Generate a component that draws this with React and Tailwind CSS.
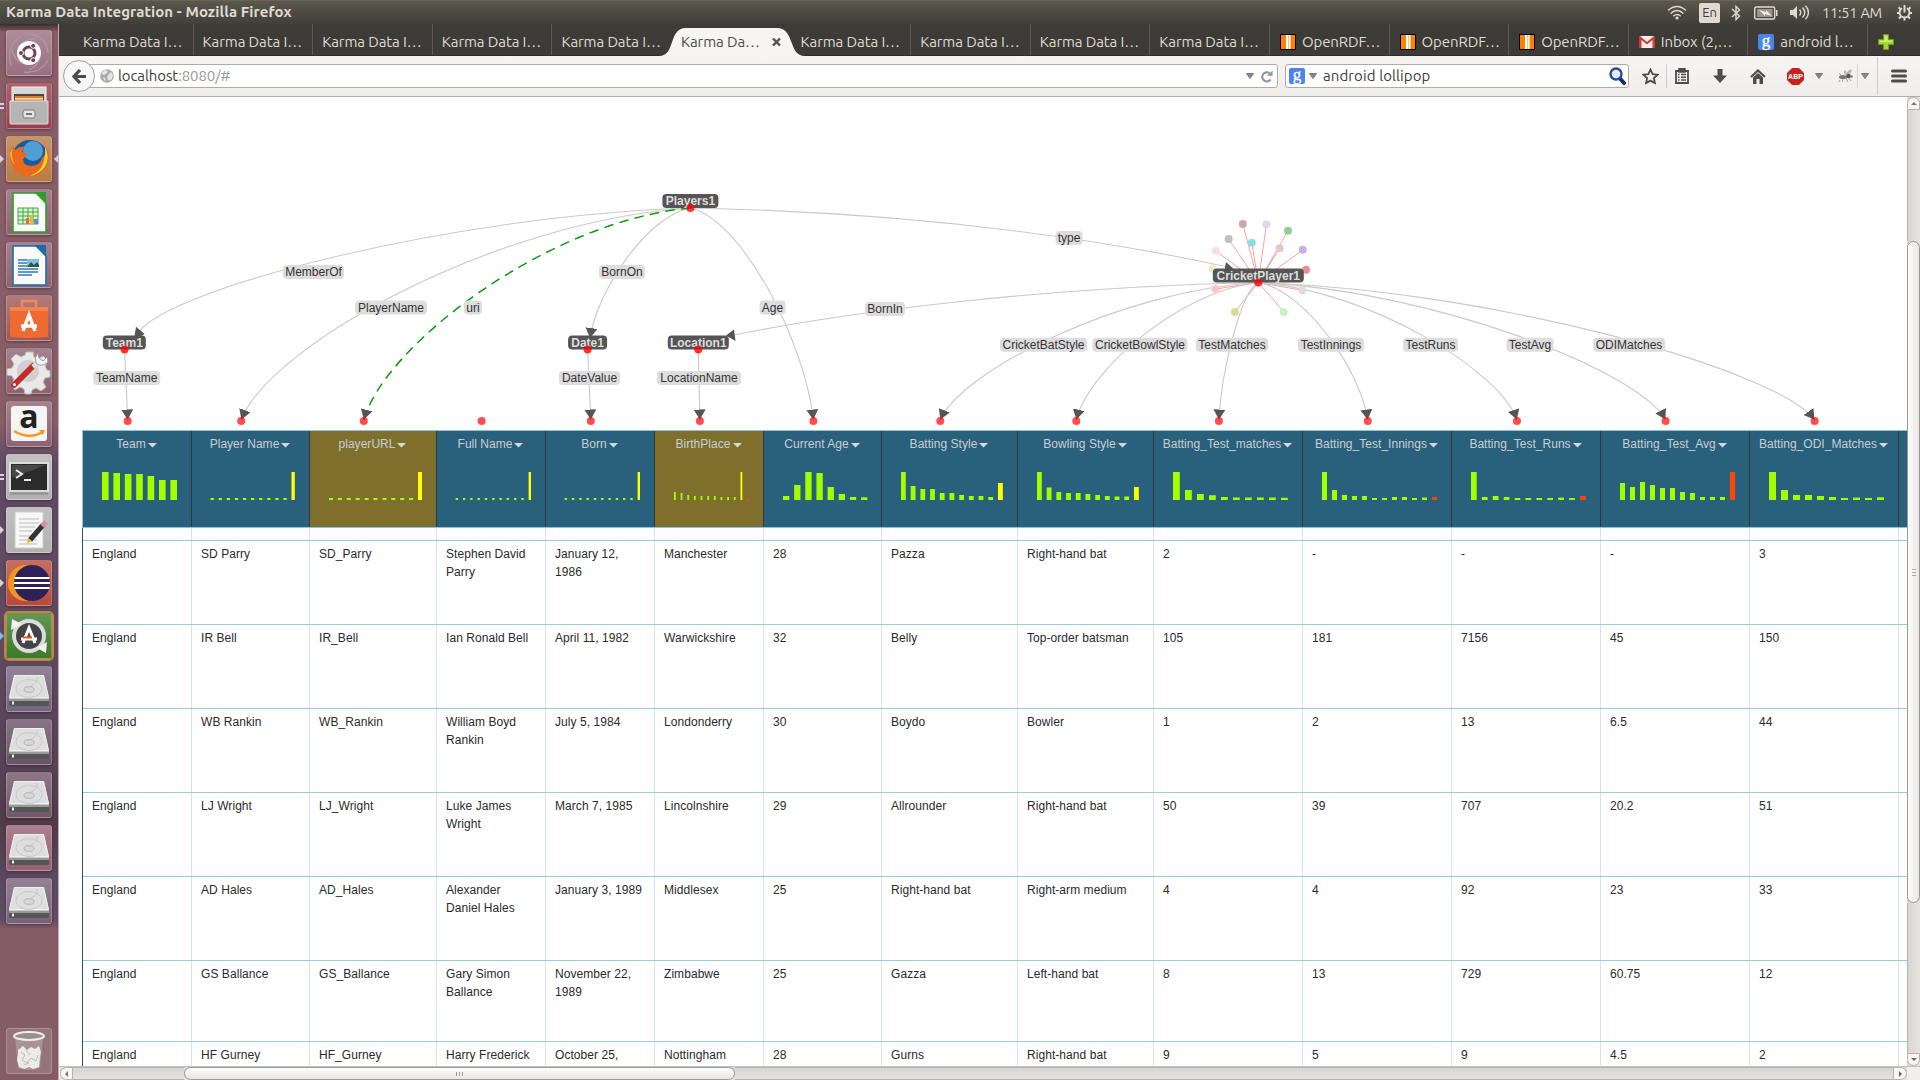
import React from "react";

const Y = "#ffff00";
const R = "#ff4500";

/* column header, width and the histogram drawn under it */
const columns = [
  { name: "Team", w: "w-[109px]", x: 20, pitch: 11.4, bw: 6.6, h: [28, 27, 26, 26, 24, 20, 20] },
  { name: "Player Name", w: "w-[118px]", x: 19.5, pitch: 8.1, bw: 3.3, h: [2, 2, 2, 2, 2, 2, 2, 2, 2, 2, 28], hi: { 10: Y } },
  { name: "playerURL", w: "w-[127px]", gold: true, x: 20, pitch: 8.9, bw: 4, h: [2, 2, 2, 2, 2, 2, 2, 2, 2, 2, 28], hi: { 10: Y } },
  { name: "Full Name", w: "w-[109px]", x: 19.6, pitch: 7.3, bw: 2.4, h: [2, 2, 2, 2, 2, 2, 2, 2, 2, 2, 28], hi: { 10: Y } },
  { name: "Born", w: "w-[109px]", x: 19.6, pitch: 7.3, bw: 2.4, h: [2, 2, 2, 2, 2, 2, 2, 2, 2, 2, 28], hi: { 10: Y } },
  { name: "BirthPlace", w: "w-[109px]", gold: true, x: 20, pitch: 6.65, bw: 1.8, h: [8, 7, 5, 4, 4, 4, 4, 3, 3, 3, 28, 2], hi: { 10: Y, 11: R } },
  { name: "Current Age", w: "w-[118px]", x: 20, pitch: 11.15, bw: 6.3, h: [4, 15, 28, 27, 13, 6, 3, 2.7] },
  { name: "Batting Style", w: "w-[136px]", x: 20, pitch: 9.7, bw: 4.8, h: [28, 14, 11, 11, 7, 7, 5, 4, 4, 3, 17], hi: { 10: Y } },
  { name: "Bowling Style", w: "w-[136px]", x: 20, pitch: 9.7, bw: 4.8, h: [28, 12.5, 8, 7, 7, 6, 5, 4, 3.5, 3.5, 13], hi: { 10: Y } },
  { name: "Batting_Test_matches", w: "w-[149px]", x: 20, pitch: 12, bw: 6.8, h: [28, 10, 6, 4.7, 3, 2.5, 2.5, 2.5, 2.5, 2.2] },
  { name: "Batting_Test_Innings", w: "w-[149px]", x: 20, pitch: 10, bw: 5, h: [28, 10, 5, 4, 4, 2, 2, 3, 3, 2, 2.5, 3], hi: { 11: R } },
  { name: "Batting_Test_Runs", w: "w-[149px]", x: 20, pitch: 10.9, bw: 5.7, h: [28, 3, 4, 3, 2, 2, 2, 2, 2.4, 2, 4], hi: { 10: R } },
  { name: "Batting_Test_Avg", w: "w-[149px]", x: 20, pitch: 10, bw: 5, h: [17, 13, 18, 15, 12, 12, 8, 7, 3, 3, 3, 28], hi: { 11: R } },
  { name: "Batting_ODI_Matches", w: "w-[149px]", x: 20, pitch: 12, bw: 7, h: [28, 10, 5, 5, 4, 3, 2, 2.4, 2, 2.7] },
];

const rows = [
  ["England", "SD Parry", "SD_Parry", "Stephen David Parry", "January 12, 1986", "Manchester", "28", "Pazza", "Right-hand bat", "2", "-", "-", "-", "3"],
  ["England", "IR Bell", "IR_Bell", "Ian Ronald Bell", "April 11, 1982", "Warwickshire", "32", "Belly", "Top-order batsman", "105", "181", "7156", "45", "150"],
  ["England", "WB Rankin", "WB_Rankin", "William Boyd Rankin", "July 5, 1984", "Londonderry", "30", "Boydo", "Bowler", "1", "2", "13", "6.5", "44"],
  ["England", "LJ Wright", "LJ_Wright", "Luke James Wright", "March 7, 1985", "Lincolnshire", "29", "Allrounder", "Right-hand bat", "50", "39", "707", "20.2", "51"],
  ["England", "AD Hales", "AD_Hales", "Alexander Daniel Hales", "January 3, 1989", "Middlesex", "25", "Right-hand bat", "Right-arm medium", "4", "4", "92", "23", "33"],
  ["England", "GS Ballance", "GS_Ballance", "Gary Simon Ballance", "November 22, 1989", "Zimbabwe", "25", "Gazza", "Left-hand bat", "8", "13", "729", "60.75", "12"],
  ["England", "HF Gurney", "HF_Gurney", "Harry Frederick", "October 25,", "Nottingham", "28", "Gurns", "Right-hand bat", "9", "5", "9", "4.5", "2"],
];

/* ---------- model graph ---------- */

const PLAYERS = [690.4, 208];
const CRICKET = [1258.3, 282.5];

function swoop([x, y], [ex, ey]) {
  const dx = ex - x;
  const dy = ey - y;
  return `M${x},${y}C${x + 0.434 * dx},${y + 0.06 * dy} ${x + 0.937 * dx},${y + 0.647 * dy} ${ex},${ey}`;
}

const columnLinks = [
  swoop(PLAYERS, [241.2, 420]),
  swoop(PLAYERS, [590, 338.5]),
  swoop(PLAYERS, [813.4, 420]),
  swoop(CRICKET, [940.3, 420]),
  swoop(CRICKET, [1076.3, 420]),
  swoop(CRICKET, [1218.9, 420]),
  swoop(CRICKET, [1367.8, 420]),
  swoop(CRICKET, [1517, 420]),
  swoop(CRICKET, [1665.6, 420]),
  swoop(CRICKET, [1814.7, 420]),
  "M124.6,350L127.7,420",
  "M587.6,350L590.8,420",
  "M698.3,350L699.9,420",
];

const labels = [
  ["MemberOf", 313.5, 272], ["PlayerName", 391, 307.5], ["uri", 473, 307.5], ["BornOn", 622, 272],
  ["TeamName", 126.7, 378], ["DateValue", 589.5, 378], ["LocationName", 699, 378], ["Age", 772.5, 307.5],
  ["BornIn", 885, 309], ["type", 1069, 238], ["CricketBatStyle", 1043.5, 344.7], ["CricketBowlStyle", 1140, 344.7],
  ["TestMatches", 1232, 344.7], ["TestInnings", 1331, 344.7], ["TestRuns", 1430.5, 344.7], ["TestAvg", 1530, 344.7],
  ["ODIMatches", 1629, 344.7],
];
const labelWidths = { MemberOf: 61, PlayerName: 72, uri: 18, BornOn: 46, TeamName: 67, DateValue: 61, LocationName: 84, Age: 26, BornIn: 40, type: 27, CricketBatStyle: 87, CricketBowlStyle: 95, TestMatches: 72, TestInnings: 66, TestRuns: 55, TestAvg: 47, ODIMatches: 72 };

const nodes = [
  ["Players1", 690.4, 201, 56, PLAYERS],
  ["Team1", 124.3, 342.5, 43, [124.6, 349.5]],
  ["Date1", 587.6, 342.5, 39, [587.6, 349.5]],
  ["Location1", 698.3, 342.5, 61, [698.3, 349.5]],
  ["CricketPlayer1", 1258.3, 275.5, 91, CRICKET],
];

const columnDots = [127.7, 241.2, 363.8, 481.6, 590.8, 699.9, 813.4, 940.3, 1076.3, 1218.9, 1367.8, 1517, 1665.6, 1814.7];

const satellites = [
  [1242.8, 224, "#c5aaa5"], [1266.4, 224.5, "#e2d6e9"], [1288, 230.7, "#8fce8f"], [1228.6, 239, "#bfbfbf"],
  [1251.8, 242.8, "#8adde5"], [1279.6, 248.2, "#e1cac8"], [1302.8, 249.8, "#c8b0e2"], [1215.8, 250.8, "#fbdbe9"],
  [1306, 269.8, "#eb9091"], [1212.8, 269, "#ebebc4"], [1215.6, 289, "#ffc6c4"], [1302.3, 290.3, "#dedede"],
  [1234.8, 312, "#dddc8e"], [1283.8, 312, "#cbefc4"],
];

function Graph() {
  return (
    <svg className="block h-[333px] w-[1848px] shrink-0" viewBox="59 97 1848 333">
      <defs>
        <marker id="arrow" viewBox="0 0 10 12" refX="10.5" refY="6" markerWidth="10" markerHeight="12" markerUnits="userSpaceOnUse" orient="auto">
          <path d="M0,0L10,6L0,12Z" fill="#555" />
        </marker>
      </defs>
      {satellites.map(([x, y]) => (
        <path key={`${x}-${y}`} d={`M${CRICKET[0]},${CRICKET[1]}L${x},${y}`} stroke="#ff9f9f" fill="none" />
      ))}
      <g fill="none" stroke="#c9c9c9" strokeWidth="1.1">
        <path d={swoop(PLAYERS, [139.5, 331])} />
        <path d="M690.4,208C900,212 1080,235 1228,267" />
        <path d="M1258.3,282.5C1050,287 860,310 735,334.7" />
        {columnLinks.map((d) => <path key={d} d={d} markerEnd="url(#arrow)" />)}
      </g>
      <path d={swoop(PLAYERS, [363.8, 420])} stroke="#0a9a0a" strokeWidth="1.5" strokeDasharray="9.5 6.3" fill="none" markerEnd="url(#arrow)" />
      <g fill="#555">
        <path d="M136,326.7L144.6,334L134,340Z" />
        <path d="M734,329.5L735.5,341L726,335.5Z" />
        <path d="M1226,262L1236,271L1224,273Z" />
      </g>
      {columnDots.map((x) => <circle key={x} cx={x} cy="420.9" r="4" fill="#ff0000" fillOpacity="0.7" />)}
      {satellites.map(([x, y, c]) => <circle key={`${x}-${y}`} cx={x} cy={y} r="4" fill={c} />)}
      {labels.map(([t, x, y]) => (
        <g key={t}>
          <rect x={x - labelWidths[t] / 2} y={y - 7} width={labelWidths[t]} height="14" rx="4" fill="#ddd" />
          <text x={x} y={y + 4} textAnchor="middle" className="text-[12px]" fill="#333">{t}</text>
        </g>
      ))}
      {nodes.map(([t, x, y, w, dot]) => (
        <g key={t}>
          <rect x={x - w / 2} y={y - 7} width={w} height="14" rx="4" fill="#555" />
          <text x={x} y={y + 4} textAnchor="middle" className="text-[12px] font-bold" fill="#ddd">{t}</text>
          <circle cx={dot[0]} cy={dot[1]} r="4" fill="#ff0000" fillOpacity="0.8" />
        </g>
      ))}
    </svg>
  );
}

/* ---------- table ---------- */

function HeaderCell({ col }) {
  return (
    <div className={`${col.w} ${col.gold ? "bg-[#7e702c]" : "bg-[#29617c]"} shrink-0 border-r border-[#30383d]`}>
      <div className="flex h-[27px] items-center justify-center pr-px text-[12px] leading-[18px] tracking-[0.03px] text-[#c9cdd0]">
        <span className="-mt-px">{col.name}</span>
        <svg className="ml-[2px] mt-[2px] h-[4.5px] w-[9px]" viewBox="0 0 8 4"><path d="M0 0h8L4 4z" fill="#d6d9dc" /></svg>
      </div>
      <svg className="mt-[14px] block h-[28px] w-full">
        {col.h.map((h, i) => (
          <rect key={i} x={col.x + i * col.pitch - 1} y={28 - h} width={col.bw} height={h} fill={(col.hi && col.hi[i]) || "#a2ff00"} />
        ))}
      </svg>
    </div>
  );
}

function Table() {
  return (
    <div className="ml-[23px] flex w-[1825px] flex-col">
      <div className="flex h-[98px] shrink-0 border-y border-l border-[#8fc2dc] bg-[#29617c]">
        {columns.map((c) => <HeaderCell key={c.name} col={c} />)}
      </div>
      <div className="flex h-[538px] shrink-0 flex-col overflow-hidden border-l border-[#24536a]">
        <div className="flex h-[12px] shrink-0">
          {columns.map((c) => <div key={c.name} className={`${c.w} shrink-0 border-r border-[#d3e6ef]`} />)}
        </div>
        {rows.map((r, ri) => (
          <div key={ri} className={`${ri === 5 ? "h-[81px]" : "h-[84px]"} flex shrink-0 border-t border-[#9cc8de]`}>
            {r.map((v, i) => (
              <div key={i} className={`${columns[i].w} shrink-0 border-r border-[#d3e6ef] pl-[9px] pr-[10px] pt-[4px] text-[12px] leading-[18px] tracking-[0.06px] text-[#2a2a2a]`}>{v}</div>
            ))}
          </div>
        ))}
      </div>
    </div>
  );
}

/* ---------- browser chrome ---------- */

const tabs = [
  ["Karma Data I…"], ["Karma Data I…"], ["Karma Data I…"], ["Karma Data I…"], ["Karma Data I…"], ["Karma Da…", "active"],
  ["Karma Data I…"], ["Karma Data I…"], ["Karma Data I…"], ["Karma Data I…"],
  ["OpenRDF…", "rdf"], ["OpenRDF…", "rdf"], ["OpenRDF…", "rdf"], ["Inbox (2,…", "mail"], ["android l…", "google"],
];

function GoogleIcon() {
  return (
    <svg className="h-4 w-4 shrink-0 overflow-visible" viewBox="0 0 16 16">
      <rect width="16" height="16" rx="2" fill="#4a82f0" />
      <text x="8" y="11.5" textAnchor="middle" fontFamily="Liberation Serif" fontSize="17" fill="#fff" stroke="#fff" strokeWidth="0.3">g</text>
    </svg>
  );
}

function TabIcon({ kind }) {
  if (kind === "rdf")
    return <svg className="h-4 w-4 shrink-0" viewBox="0 0 16 16"><path d="M0 0h16v16H0z" fill="#000" /><path d="M1 1h14v14H1z" fill="#ff8000" /><path d="M6 1h2v14H6zM9 1h1.600v14H9z" fill="#fff" /><path d="M8 1h1v14H8z" fill="#ffc078" /></svg>;
  if (kind === "mail")
    return <svg className="h-4 w-4 shrink-0" viewBox="0 0 16 16"><path d="M1 2h14v12H1z" fill="#f4f0ef" /><path d="M0 3q0-1 1-1l7 6 7-6q1 0 1 1v11h-2.500V6L8 10.500 2.500 6v8H0z" fill="#d5382c" /></svg>;
  if (kind === "google") return <GoogleIcon />;
  return null;
}

function TabBar() {
  return (
    <div className="flex h-[32px] shrink-0 border-b border-[#2e2d29] bg-[#3c3b37] pl-[15px]">
      {tabs.map(([t, kind], i) =>
        kind === "active" ? (
          <div key={i} className="relative flex h-[32px] w-[119.6px] shrink-0 items-center pl-[9px] pt-[4px] text-[15px] text-[#4c4c4c]">
            <svg className="absolute -left-[13px] top-[4px] h-[28px] w-[146px]" viewBox="0 0 146 28">
              <path d="M0 28C17 28 9 0 27 0H118C136 0 129 28 146 28Z" fill="#f6f5f4" />
            </svg>
            <span className="relative w-[80px] whitespace-nowrap tracking-[-0.1px]">{t}</span>
            <svg className="relative ml-[11px] h-[8px] w-[9px]" viewBox="0 0 9 8"><path d="M1 .5l7 7M8 .5l-7 7" stroke="#555" strokeWidth="2.400" /></svg>
          </div>
        ) : (
          <div key={i} className={`${i === 4 ? "" : "border-r border-[#5b5a55]"} flex h-[31px] w-[119.6px] shrink-0 items-center gap-[6px] ${kind ? "pl-[10px]" : "pl-[9px]"} pt-[5px] text-[15px] text-[#dfdbd2]`}>
            <TabIcon kind={kind} />
            <span className="whitespace-nowrap tracking-[-0.1px]">{t}</span>
          </div>
        )
      )}
      <svg className="ml-[10px] mt-[10px] h-4 w-4" viewBox="0 0 16 16"><path d="M5.500 .5h5v5h5v5h-5v5h-5v-5h-5v-5h5z" fill="#a4d435" stroke="#6b9a1c" /><path d="M6.500 1.500h3v5h5v1.500h-13V6.500h5z" fill="#cdec74" /></svg>
    </div>
  );
}

function Down({ className }) {
  return <svg className={`h-[6px] w-[8px] shrink-0 ${className}`} viewBox="0 0 8 6"><path d="M.5 .5h7L4 5.500z" fill="#888" stroke="#777" /></svg>;
}

function Toolbar() {
  return (
    <div className="flex h-[41px] shrink-0 items-center border-b border-[#b3aeaa] bg-gradient-to-b from-[#f6f5f4] to-[#efeeed] pl-[4px] text-[15px]">
      <div className="relative z-10 flex h-[32px] w-[32px] shrink-0 items-center justify-center rounded-full border border-[#9aa4ae] bg-[#f7f7f7]">
        <svg className="h-[15px] w-[15px]" viewBox="0 0 15 15"><path d="M8 1L2 7.500 8 14M2.500 7.500H14" fill="none" stroke="#4c4c4c" strokeWidth="3.200" /></svg>
      </div>
      <div className="-ml-[8px] flex h-[24px] w-[1191px] shrink-0 items-center rounded-r-[3px] border border-[#b0aba6] bg-white pl-[12px] text-[#3c3c3c]">
        <svg className="h-[14px] w-[14px] shrink-0" viewBox="0 0 14 14"><circle cx="7" cy="7" r="6.800" fill="#aaa" /><path d="M2 3l3-2 3 1-1 2-3 2-2-1zM8 6l3-3 2 3-1 4-3 2-2-3zM3 8l2 1 1 3-2-1z" fill="#e4e4e4" /></svg>
        <span className="ml-[4px] w-[1121px] shrink-0 whitespace-nowrap tracking-[-0.1px]">localhost<span className="text-[#999]">:8080/#</span></span>
        <Down className="ml-[7px]" />
        <svg className="ml-[7px] h-[13px] w-[12px] shrink-0" viewBox="0 0 12 13"><path d="M9.500 9.500A4.500 4.500 0 1 1 8.500 3.200" fill="none" stroke="#8a97a5" strokeWidth="2.200" /><path d="M6 5.800h5.600V.4z" fill="#8a97a5" /></svg>
      </div>
      <div className="ml-[7px] flex h-[24px] w-[344px] shrink-0 items-center rounded-[3px] border border-[#b0aba6] bg-white pl-[3px] text-[#3c3c3c]">
        <GoogleIcon />
        <Down className="ml-[4px]" />
        <span className="ml-[6px] w-[286px] shrink-0 whitespace-nowrap tracking-[0.1px]">android lollipop</span>
        <svg className="h-[18px] w-[17px] shrink-0" viewBox="0 0 17 18"><path d="M10.500 11l4.500 5" stroke="#222a5c" strokeWidth="4" strokeLinecap="round" /><circle cx="7" cy="7" r="5.500" fill="#e3edfa" stroke="#2d4b96" strokeWidth="2.400" /></svg>
      </div>
      <svg className="ml-[13px] h-[17px] w-[17px] shrink-0" viewBox="0 0 17 17"><path d="M8.500 1.500l2.100 4.600 5 .6-3.700 3.400 1 5-4.400-2.500-4.400 2.500 1-5L1.400 6.700l5-.6z" fill="none" stroke="#4c4c4c" strokeWidth="1.800" /></svg>
      <span className="ml-[7px] h-[24px] w-px bg-[#c5cbd1]" />
      <svg className="ml-[8px] h-[16px] w-[14px] shrink-0" viewBox="0 0 14 16"><path d="M1 3h12v12H1z" fill="none" stroke="#4c4c4c" strokeWidth="1.800" /><path d="M4 0h6v4H4zM3 6.500h1.500M6 6.500h5M3 9.300h1.500M6 9.300h5M3 12h1.500M6 12h5" fill="#4c4c4c" stroke="#4c4c4c" strokeWidth="1.400" /></svg>
      <svg className="ml-[24px] h-[16px] w-[14px] shrink-0" viewBox="0 0 14 16"><path d="M4.500 1h5v6.500H14L7 15 0 7.500h4.500z" fill="#4c4c4c" /></svg>
      <svg className="ml-[23px] h-[15px] w-[16px] shrink-0" viewBox="0 0 16 15"><path d="M1 8l7-6.500L15 8" fill="none" stroke="#4c4c4c" strokeWidth="2.200" /><path d="M3 8.500l5-4.600 5 4.600V15H9.500v-5h-3v5H3z" fill="#4c4c4c" /></svg>
      <svg className="ml-[21px] h-[17px] w-[17px] shrink-0" viewBox="0 0 17 17"><path d="M5 0h7l5 5v7l-5 5H5l-5-5V5z" fill="#c9221e" /><text x="8.500" y="11.200" textAnchor="middle" fontSize="7" fontWeight="bold" fill="#fff" fontFamily="Liberation Sans">ABP</text></svg>
      <Down className="ml-[11px]" />
      <svg className="ml-[15px] h-[14px] w-[16px] shrink-0" viewBox="0 0 16 14"><path d="M2 11l-1 2M5 10l-1 3M8 9l2 4M10 8l3 4M3 6L1 4" stroke="#888" strokeWidth=".8" /><ellipse cx="5" cy="8" rx="4" ry="2" fill="#777" /><ellipse cx="11" cy="3.500" rx="1.600" ry="3.600" transform="rotate(40 11 3.500)" fill="#b5b5b5" /><ellipse cx="7.500" cy="4" rx="1.300" ry="3" transform="rotate(-20 7.500 4)" fill="#bbb" /><circle cx="10.500" cy="7" r="2.200" fill="#555" /><circle cx="13.500" cy="7.500" r="1.300" fill="#777" /></svg>
      <span className="ml-[3px] h-[24px] w-px bg-[#d8d6d4]" />
      <Down className="ml-[3px]" />
      <span className="ml-[8px] h-[38px] w-px bg-[#c9cfd6]" />
      <svg className="ml-[13px] h-[14px] w-[16px] shrink-0" viewBox="0 0 16 14"><path d="M1.500 2h13M1.500 7h13M1.500 12h13" stroke="#4c4c4c" strokeWidth="3" strokeLinecap="round" /></svg>
    </div>
  );
}

function TopPanel() {
  return (
    <div className="flex h-[24px] shrink-0 items-center border-t border-[#6a6552] bg-gradient-to-b from-[#5b574e] to-[#403f3a] pl-[6px] pr-[7px] text-[#dfdbd2]">
      <span className="whitespace-nowrap text-[15px] font-bold tracking-[0.08px]">Karma Data Integration - Mozilla Firefox</span>
      <span className="grow" />
      <svg className="h-[15px] w-[20px]" viewBox="0 0 20 15"><path d="M1 5.500Q10-2.500 19 5.500M3.600 8.500Q10 2.500 16.400 8.500M6.300 11.200Q10 7.800 13.700 11.200" fill="none" stroke="#dfdbd2" strokeWidth="1.500" /><circle cx="10" cy="13" r="1.600" fill="#dfdbd2" /></svg>
      <span className="ml-[12px] flex h-[20px] w-[21px] items-center justify-center rounded-[2px] bg-[#dfdbd2] text-[13px] text-[#3c3b37]">En</span>
      <svg className="ml-[11px] h-[16px] w-[10px]" viewBox="0 0 10 16"><path d="M1 4l7.500 7L5 14.500v-13L8.500 5 1 12" fill="none" stroke="#dfdbd2" strokeWidth="1.400" /></svg>
      <svg className="ml-[13px] h-[14px] w-[24px]" viewBox="0 0 24 14"><rect x=".7" y="1" width="20" height="12" rx="1.500" fill="none" stroke="#dfdbd2" strokeWidth="1.400" /><path d="M3 3h15.500v8H3z" fill="#98958d" /><path d="M22 4h1.500v6H22z" fill="#dfdbd2" /><path d="M5 4l7 2 0-2 6 6-7-2v2z" fill="#f2efe8" /></svg>
      <svg className="ml-[12px] h-[15px] w-[20px]" viewBox="0 0 20 15"><path d="M0 5h3l4-4v13l-4-4H0z" fill="#dfdbd2" /><path d="M9.500 4.500q2.500 3 0 6M12.500 2.500q4.500 5 0 10M15.500.8q6 6.700 0 13.400" fill="none" stroke="#dfdbd2" strokeWidth="1.400" /></svg>
      <span className="ml-[12px] w-[63px] whitespace-nowrap text-[14.500px] tracking-[-0.2px]">11:51 AM</span>
      <svg className="ml-[11px] h-[17px] w-[17px]" viewBox="0 0 17 17"><path d="M6 4.200A5 5 0 1 0 11 4.200" fill="none" stroke="#dfdbd2" strokeWidth="1.900" /><path d="M8.500 1v7.500M8.500 13.500v3M1 9h2.500M13.500 9H16M2.600 3.200l2 2M14.400 3.200l-2 2M3 14.500l2-2M14 14.500l-2-2" stroke="#dfdbd2" strokeWidth="2" /></svg>
    </div>
  );
}

/* ---------- launcher ---------- */

const gear = (
  <g>
    <path d="M20 4h7l1 5 4 2 5-3 5 5-3 5 2 4 3 1v6l-5 1-2 4 3 5-5 4-5-3-4 2-1 4h-6l-1-5-4-2-5 3-4-5 3-5-2-4-5-1v-6l5-1 2-4-3-5 5-5 5 3 4-2z" fill="#e9e9e9" stroke="#bbb" />
    <circle cx="22" cy="23" r="11" fill="#d0d0d0" />
    <path d="M8 37L27 18" stroke="#c22b2b" strokeWidth="6" strokeLinecap="round" />
    <path d="M27 19l7-6" stroke="#ddd" strokeWidth="5" />
    <path d="M32 5q-4 4-2 10 5 5 12-1l-1-5-4 4-4-3z" fill="#f4f4f4" stroke="#999" />
    <circle cx="8.500" cy="36.500" r="1.500" fill="#fff" />
  </g>
);

const doc = (c1, inner) => (
  <g>
    <path d="M7 4h24l9 10v29H7z" fill="#fafafa" stroke={c1} strokeWidth="1.600" />
    <path d="M28 3h12v12z" fill={c1} />
    {inner}
  </g>
);

const disk = (
  <g>
    <path d="M3 32l5-23h30l5 23v7H3z" fill="#c9c9c9" />
    <path d="M3.500 31.500l5-22h29l5 22z" fill="#dedede" stroke="#f0f0f0" />
    <path d="M3 33h40v6q0 1-1 1H4q-1 0-1-1z" fill="#555" />
    <path d="M3 33h40v2H3z" fill="#999" />
    <ellipse cx="23" cy="22.500" rx="13" ry="9" fill="none" stroke="#c8c8c8" />
    <ellipse cx="23" cy="23.500" rx="5" ry="2.800" fill="#d8d8d8" stroke="#b2b2b2" />
    <path d="M31 11q1 6-6 9" fill="none" stroke="#c5c5c5" />
    <path d="M6 35.500h2v3H6z" fill="#eee" />
  </g>
);

const launcher = [
  { bg: "bg-[#9a7081]", art: <g><path d="M23 4q18 2 19 19M42 30Q34 44 18 42M5 35Q0 16 14 7M12 24Q14 8 30 9M32 19q6 14-9 21M26 33Q10 36 6 20" fill="none" stroke="#b893a0" strokeWidth="1.300" /><circle cx="23" cy="23" r="12" fill="#fff" /><circle cx="23" cy="23" r="6" fill="none" stroke="#6d4454" strokeWidth="3" /><g fill="#6d4454" stroke="#fff"><circle cx="15" cy="23" r="2.500" /><circle cx="27.200" cy="15.800" r="2.500" /><circle cx="27.200" cy="30.200" r="2.500" /></g></g> },
  { bg: "bg-[#9c3b4b]", mark: "two", art: <g><path d="M6 4h34v30H6z" fill="#d7d7d7" stroke="#eee" /><path d="M8 11h30v8H8z" fill="#5a4336" /><path d="M9 13h28v7H9z" fill="#e87826" /><path d="M9 15h28v1.500H9z" fill="#ffe0b0" /><path d="M4 18h38v22q0 1-1 1H5q-1 0-1-1z" fill="#b5b5b5" stroke="#ddd" /><rect x="17" y="27" width="12" height="8" rx="2" fill="#e4e4e4" stroke="#777" /><path d="M20 30h6v2h-6z" fill="#777" /></g> },
  { bg: "bg-[#b97a46]", mark: "active", art: <g><circle cx="24" cy="22" r="18" fill="#1c5a9e" /><circle cx="27" cy="15" r="10" fill="#4d9fd6" /><path d="M39 10q8 12 0 23Q28 45 14 38 2 30 4 15q1-4 3-5l2 4q5-4 9-3l-2 5 6 2-5 5q0 7 8 7 10-1 11-8l3-3q0-5 0-9z" fill="#e96a1c" /><path d="M39 11q6 13-2 22-6 6-13 7 11-5 13-12 3-9 2-17z" fill="#ffd42a" /><path d="M7 11q-3 9 2 18-5-5-5-12z" fill="#ffb02c" /></g> },
  { bg: "bg-[#8e6272]", art: doc("#2f9e2b", <g><path d="M12 19h20v16H12z" fill="#d9f2d2" stroke="#43a83c" /><path d="M12 23h20M12 27h20M12 31h20M17 19v16M22 19v16M27 19v16" stroke="#43a83c" /><path d="M20 29h3v6h-3z" fill="#e46b3c" /><path d="M24 26h3v9h-3z" fill="#f2b82c" /><path d="M28 30h4v5h-4z" fill="#5c8fd6" /></g>) },
  { bg: "bg-[#8e6272]", art: doc("#1e6ca8", <g><path d="M12 18h9M12 21h9M12 24h9M12 27h20M12 30h20M12 33h14" stroke="#2e78b5" strokeWidth="1.500" /><path d="M21 17h12v8H21z" fill="#7fc0ea" /><path d="M21 25l4-5 3 3 3-3 2 3v2z" fill="#2f5a2f" /></g>) },
  { bg: "bg-[#9c5a58]", art: <g><path d="M16 13V6h14v7" fill="none" stroke="#f08a5c" strokeWidth="2.500" /><path d="M4 12h38v30q-19 2-38 0z" fill="#ef6a30" /><path d="M4 12h38v4H4z" fill="#f4834e" /><path d="M17 36l6-16 6 16M15 31h16" fill="none" stroke="#fff" strokeWidth="3.500" /></g> },
  { bg: "bg-[#8e6272]", art: gear },
  { bg: "bg-[#8e6272]", art: <g><rect x="5" y="5" width="36" height="35" rx="3" fill="#f5f5f5" /><text x="23" y="27" textAnchor="middle" fontFamily="Open Sans" fontWeight="bold" fontSize="32" fill="#222">a</text><path d="M8 30q15 9 29 1" fill="none" stroke="#f59a1c" strokeWidth="2.500" /><path d="M33 29h6l-2 5z" fill="#f59a1c" /></g> },
  { bg: "bg-[#b3b0b2]", mark: "two", art: <g><path d="M4 9h38v28H4z" fill="#2b2b2b" stroke="#ddd" strokeWidth="2" /><path d="M6 11h34L6 24z" fill="#484848" /><path d="M4 38h38v3H4z" fill="#999" /><path d="M10 16l6 4-6 4M18 26h7" fill="none" stroke="#eee" strokeWidth="2" /></g> },
  { bg: "bg-[#b3b0b2]", mark: "one", art: <g><path d="M9 5h28v36H9z" fill="#f7f7f7" stroke="#ccc" /><path d="M13 12h20M13 16h20M13 20h16M13 24h13M13 29h18M13 33h18M13 37h18" stroke="#bbb" /><path d="M24 33l13-15" stroke="#333" strokeWidth="5" /><path d="M36 19l4-4" stroke="#e088a8" strokeWidth="5" /><path d="M21 37l1-6 4 3z" fill="#e8c22e" /></g> },
  { bg: "bg-[#b74a3d]", mark: "one", art: <g><circle cx="20" cy="23" r="18" fill="#f7941e" /><circle cx="26" cy="23" r="18" fill="#2c2255" /><path d="M8.500 18h35M8 23h36M8.500 28h35" stroke="#fff" strokeWidth="2.200" /></g> },
  { bg: "bg-[#3d7a2a] outline outline-2 outline-[#d07f3c]", mark: "blue", art: <g><circle cx="23" cy="23" r="17" fill="#dcdcdc" /><circle cx="23" cy="23" r="13" fill="#444" /><path d="M17 30l6-15 6 15M15 26h16" fill="none" stroke="#fff" strokeWidth="3" /><path d="M17 24.500h9" stroke="#ee5a1c" strokeWidth="2" /><path d="M5 17l1-11 10 5zM41 29l-1 11-9-5z" fill="#f2f2f2" /></g> },
  { bg: "bg-[#76647c]", art: disk },
  { bg: "bg-[#6a5368]", art: disk },
  { bg: "bg-[#715668]", art: disk },
  { bg: "bg-[#975f74]", art: disk },
  { bg: "bg-[#786279]", art: disk },
];

function Tile({ item }) {
  return (
    <div className={`${item.bg} relative h-[46px] w-[46px] shrink-0 rounded-[3px] border border-white/20 bg-gradient-to-b from-white/20 to-white/0 shadow-[0_1px_3px_rgba(0,0,0,0.35)]`}>
      <svg className="-m-px block h-[46px] w-[46px] overflow-visible" viewBox="0 0 46 46">{item.art}</svg>
      {item.mark === "two" && <span className="absolute -left-[7px] top-[19px] h-[6px] w-[4px] border-y-2 border-[#d8d0d4]" />}
      {(item.mark === "one" || item.mark === "active" || item.mark === "blue") && (
        <svg className="absolute -left-[7px] top-[18px] h-[8px] w-[4px]" viewBox="0 0 4 8"><path d="M0 0l4 4-4 4z" fill={item.mark === "blue" ? "#6fc3ee" : "#d8d0d4"} /></svg>
      )}
      {item.mark === "active" && <svg className="absolute -right-[7px] top-[18px] h-[8px] w-[4px]" viewBox="0 0 4 8"><path d="M4 0L0 4l4 4z" fill="#d8d0d4" /></svg>}
    </div>
  );
}

function Launcher() {
  return (
    <div className="flex w-[59px] shrink-0 flex-col gap-[7px] border-r border-[#d3a3ad] bg-[linear-gradient(to_bottom,#3b2c30_0px,#875d67_8px,#875d67_400px,#5f4a63_440px,#5d4a5f_640px,#574257_740px,#513b47_800px,#5d4a62_860px,#624a63_895px,#835c65_905px,#835c65_1056px)] pl-[6px] pt-[6px]">
      {launcher.map((item, i) => <Tile key={i} item={item} />)}
      <div className="grow" />
      <div className="mb-[6px] flex h-[46px] w-[46px] rounded-[3px] border border-white/20 bg-white/15">
        <svg className="-m-px block h-[46px] w-[46px]" viewBox="0 0 46 46">
          <path d="M9 8l3 32q11 4 22 0l3-32z" fill="#b9a8ab" fillOpacity=".6" />
          <ellipse cx="23" cy="8" rx="15" ry="4" fill="#9a8e8e" stroke="#eee" strokeWidth="2" />
          <path d="M12 22l5-4 4 4 4-3 4 2 4-3 2 6-1 5-1 10-6 2-4-2-5 2-5-2-2-7 1-6z" fill="#ecebe8" />
          <path d="M15 24l4 3-3 5 5 3 4-5 5 3 2-6M20 22l4 5M18 37l5-2" fill="none" stroke="#bfbdb8" />
        </svg>
      </div>
    </div>
  );
}

function VScroll() {
  return (
    <div className="flex w-[13px] shrink-0 flex-col bg-gradient-to-r from-[#d6d5d3] to-[#e4e3e1]">
      <div className="flex h-[13px] items-center justify-center rounded-t-full border border-[#b5b2ae] bg-[#f7f6f5]"><svg className="h-[3px] w-[6px]" viewBox="0 0 6 3"><path d="M0 3h6L3 0z" fill="#777" /></svg></div>
      <div className="h-[131px] border-l border-[#b5b2ae]" />
      <div className="flex h-[662px] flex-col items-center justify-center gap-[2px] rounded-full border border-[#9c9893] bg-gradient-to-r from-[#fdfdfd] to-[#e8e6e4]">
        <span className="h-px w-[4px] bg-[#aaa]" /><span className="h-px w-[4px] bg-[#aaa]" /><span className="h-px w-[4px] bg-[#aaa]" />
      </div>
      <div className="h-[150px] border-l border-[#b5b2ae]" />
      <div className="flex h-[13px] items-center justify-center rounded-b-full border border-[#b5b2ae] bg-[#f7f6f5]"><svg className="h-[3px] w-[6px]" viewBox="0 0 6 3"><path d="M0 0h6L3 3z" fill="#666" /></svg></div>
    </div>
  );
}

function HScroll() {
  return (
    <div className="flex h-[13px] w-[1847px] shrink-0 bg-gradient-to-b from-[#d6d5d3] to-[#e4e3e1]">
      <div className="flex w-[13px] items-center justify-center rounded-l-full border border-[#b5b2ae] bg-[#f7f6f5]"><svg className="h-[6px] w-[3px]" viewBox="0 0 3 6"><path d="M3 0v6L0 3z" fill="#777" /></svg></div>
      <div className="w-[111px] border-y border-[#b5b2ae]" />
      <div className="flex w-[551px] items-center justify-center gap-[2px] rounded-full border border-[#9c9893] bg-gradient-to-b from-[#fdfdfd] to-[#e8e6e4]">
        <span className="h-[4px] w-px bg-[#999]" /><span className="h-[4px] w-px bg-[#999]" /><span className="h-[4px] w-px bg-[#999]" />
      </div>
      <div className="grow border-y border-[#b5b2ae]" />
      <div className="flex w-[14px] items-center justify-center rounded-r-full border border-[#b5b2ae] bg-[#f7f6f5]"><svg className="h-[6px] w-[3px]" viewBox="0 0 3 6"><path d="M0 0v6l3-3z" fill="#666" /></svg></div>
    </div>
  );
}

export default function App() {
  return (
    <div className="flex h-[1080px] w-[1920px] flex-col overflow-hidden bg-white font-['Ubuntu','Noto_Sans',sans-serif]">
      <TopPanel />
      <div className="flex h-[1056px]">
        <Launcher />
        <div className="flex w-[1861px] flex-col">
          <TabBar />
          <Toolbar />
          <div className="flex h-[969px] font-['Liberation_Sans',Arial,sans-serif]">
            <div className="flex w-[1848px] flex-col overflow-hidden">
              <Graph />
              <Table />
            </div>
            <VScroll />
          </div>
          <div className="flex h-[14px] border-t border-[#c5c2bf] bg-[#f0efed] pl-px">
            <HScroll />
          </div>
        </div>
      </div>
    </div>
  );
}
